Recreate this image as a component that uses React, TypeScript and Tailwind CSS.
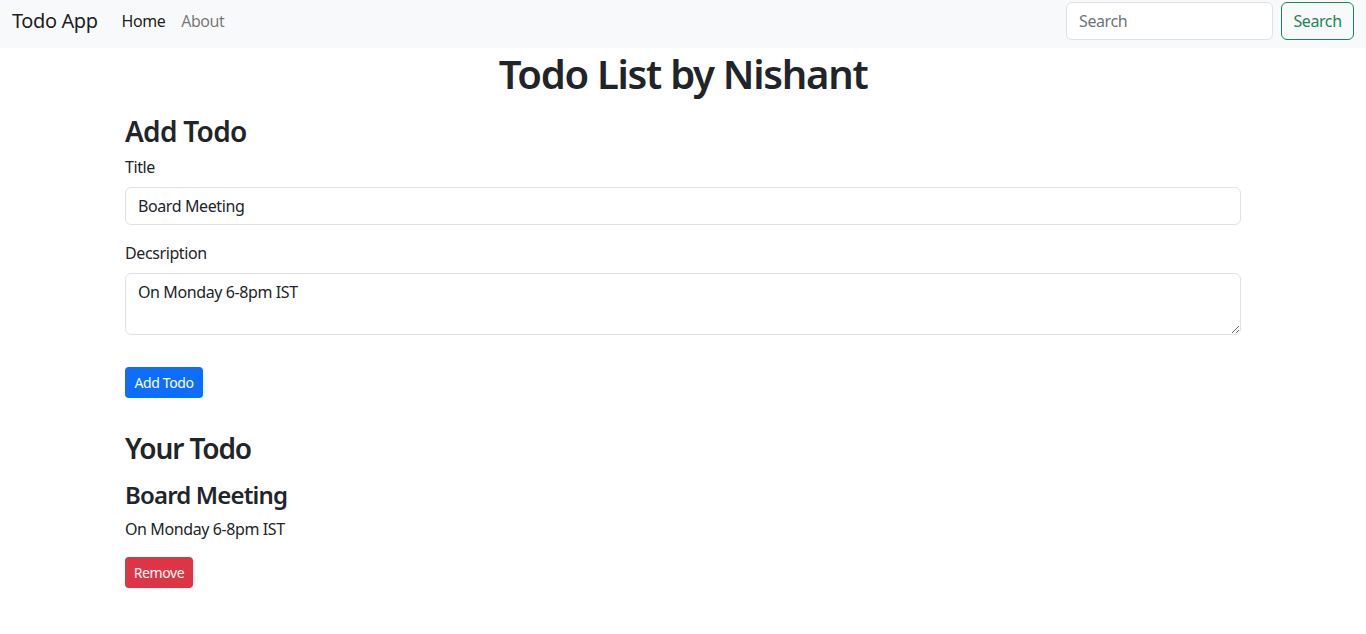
export default function App() {
  return (
    <div className="min-h-screen bg-white text-[#212529] font-['Noto_Sans',sans-serif] text-base leading-6 tracking-[-0.025em]">
      {/* Navbar */}
      <nav className="flex h-12 items-start justify-between bg-[#f8f9fa] px-3 pt-[2px]">
        <div className="flex h-[38px] items-center">
          <a className="mr-4 text-xl leading-[30px] text-black/90">Todo App</a>
          <a className="px-2 tracking-[-0.03em] text-black/90">Home</a>
          <a className="px-2 tracking-[-0.03em] text-black/55">About</a>
        </div>
        <form className="flex items-center">
          <input
            placeholder="Search"
            className="mr-2 h-[38px] w-[207px] rounded-md border border-[#dee2e6] bg-white px-3 text-base placeholder:text-[#6c757d] outline-none"
          />
          <button
            type="button"
            className="h-[38px] w-[73px] rounded-md border border-[#198754] text-base text-[#198754]"
          >
            Search
          </button>
        </form>
      </nav>

      <h1 className="pt-[2px] text-center text-[40px] font-semibold leading-[48px] tracking-[-0.032em]">
        Todo List by Nishant
      </h1>

      {/* Add todo form */}
      <div className="mx-auto mt-4 w-[1116px]">
        <h3 className="mb-[7px] text-[28px] font-semibold leading-[34px] tracking-[-0.025em]">Add Todo</h3>
        <form>
          <div className="mb-4">
            <label className="mb-2 block">Title</label>
            <input
              defaultValue="Board Meeting"
              className="block h-[38px] w-full rounded-md border border-[#dee2e6] px-3 outline-none"
            />
          </div>
          <div className="mb-8">
            <label className="mb-2 block">Decsription</label>
            <textarea
              rows={2}
              defaultValue="On Monday 6-8pm IST"
              className="block h-[62px] w-full rounded-md border border-[#dee2e6] px-3 py-1.5 outline-none"
            />
          </div>
          <button
            type="button"
            className="h-[31px] w-[78px] rounded bg-[#0d6efd] text-sm text-white"
          >
            Add Todo
          </button>
        </form>

        {/* Todo list */}
        <div className="mt-[33px]">
          <h3 className="mb-[15px] text-[28px] font-semibold leading-[34px] tracking-[-0.04em]">Your Todo</h3>
          <h4 className="mb-2 text-2xl font-semibold leading-[29px] tracking-[-0.035em]">Board Meeting</h4>
          <p className="mb-4">On Monday 6-8pm IST</p>
          <button
            type="button"
            className="h-[31px] w-[68px] rounded bg-[#dc3545] text-sm text-white"
          >
            Remove
          </button>
        </div>
      </div>
    </div>
  );
}
